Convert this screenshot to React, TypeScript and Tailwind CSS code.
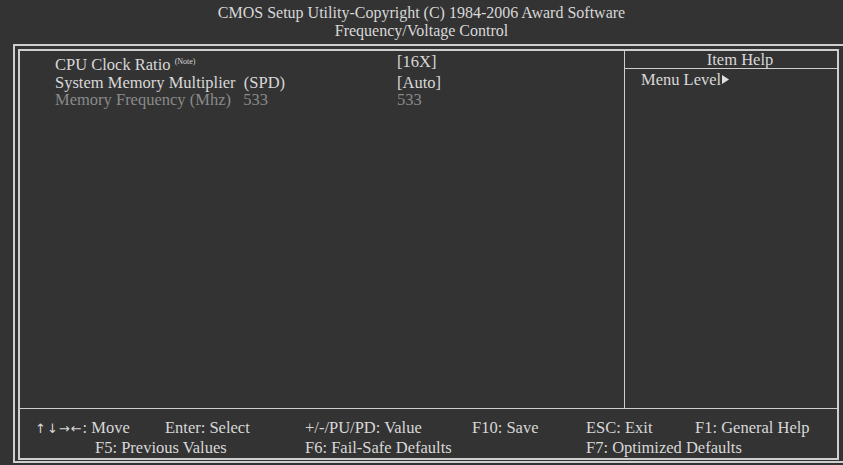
export default function App() {
    const serif = { fontFamily: '"Liberation Serif", "Times New Roman", serif' };
    return (
        <div
            className="w-[843px] h-[465px] overflow-hidden bg-[#333333] text-[#d8d8d8]"
            style={serif}
        >
            {/* title */}
            <div className="h-[44px] pt-[4px] text-center text-[16px] leading-[18px]">
                <div>CMOS Setup Utility-Copyright (C) 1984-2006 Award Software</div>
                <div>Frequency/Voltage Control</div>
            </div>

            {/* double frame */}
            <div className="ml-[13px] w-[834px] h-[419px] border-2 border-[#cfcfcf] pl-[3px] pt-[3px] pb-[1px] pr-[6px]">
                <div className="h-full border-2 border-[#cfcfcf] flex flex-col">
                    <div className="flex flex-1">
                        {/* settings list */}
                        <div className="flex-1 pt-[2px] text-[16.5px] leading-[17.5px]">
                            <div className="flex">
                                <div className="w-[377px] pl-[35px]">
                                    CPU Clock Ratio{" "}
                                    <span className="text-[8px] align-[6px]">(Note)</span>
                                </div>
                                <div>[16X]</div>
                            </div>
                            <div className="flex">
                                <div className="w-[377px] pl-[35px] whitespace-pre">
                                    System Memory Multiplier  (SPD)
                                </div>
                                <div>[Auto]</div>
                            </div>
                            <div className="flex text-[#8a8a8a]">
                                <div className="w-[377px] pl-[35px] whitespace-pre">
                                    Memory Frequency (Mhz)   533
                                </div>
                                <div>533</div>
                            </div>
                        </div>

                        {/* item help */}
                        <div className="w-[213px] border-l border-[#cfcfcf] text-[16.5px] leading-[17px]">
                            <div className="h-[18px] border-b border-[#cfcfcf] pl-[18px] text-center">
                                Item Help
                            </div>
                            <div className="pl-[16px] pt-[2px] flex items-center">
                                Menu Level
                                <svg width="7" height="9" viewBox="0 0 7 9" className="ml-[1px]">
                                    <path d="M0 0 L7 4.5 L0 9 Z" fill="#e0e0e0" />
                                </svg>
                            </div>
                        </div>
                    </div>

                    {/* key legend */}
                    <div className="h-[50px] border-t border-[#cfcfcf] pt-[9px] text-[16.5px] leading-[19px]">
                        <div className="flex">
                            <div className="w-[145px] pl-[15px] whitespace-pre">
                                <span className="text-[13px] font-['DejaVu_Sans',sans-serif] tracking-[1px]">
                                    ↑↓→←
                                </span>
                                : Move
                            </div>
                            <div className="w-[140px]">Enter: Select</div>
                            <div className="w-[167px]">+/-/PU/PD: Value</div>
                            <div className="w-[114px]">F10: Save</div>
                            <div className="w-[109px]">ESC: Exit</div>
                            <div>F1: General Help</div>
                        </div>
                        <div className="flex">
                            <div className="w-[285px] pl-[75px]">F5: Previous Values</div>
                            <div className="w-[281px]">F6: Fail-Safe Defaults</div>
                            <div>F7: Optimized Defaults</div>
                        </div>
                    </div>
                </div>
            </div>
        </div>
    );
}
